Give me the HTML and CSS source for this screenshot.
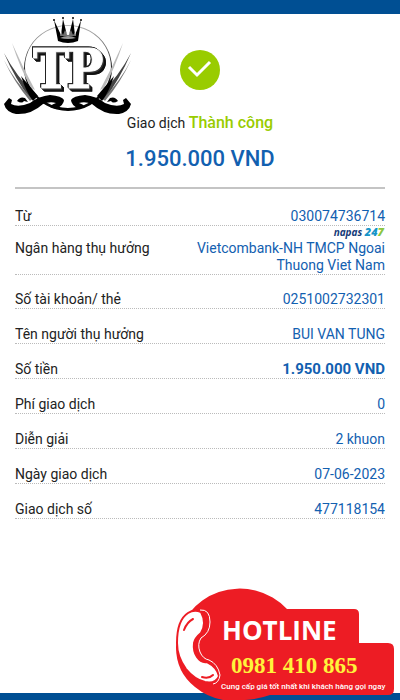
FILE: index.html
```html
<!DOCTYPE html>
<html lang="vi">
  <head>
    <meta charset="utf-8" />
    <meta name="viewport" content="width=device-width, initial-scale=1" />
    <title>Giao dịch thành công</title>
    <link rel="stylesheet" href="styles.css" />
  </head>
  <body>
    <div class="bar bar-top"></div>

    <svg class="crest" viewBox="0 14 136 104" role="img" aria-label="TP">
      <defs>
        <linearGradient id="ring" x1="0" y1="0" x2="0" y2="1">
          <stop offset="0" stop-color="#bbb" />
          <stop offset="0.5" stop-color="#222" />
          <stop offset="1" stop-color="#000" />
        </linearGradient>
        <g id="wing">
          <path d="M4 53 Q16 76 36 96 L31 100 Q15 79 4 53Z" fill="#444" />
          <path d="M4 60 Q14 80 32 99 L30 101 Q14 82 4 60Z" fill="#777" />
          <path d="M12 43 Q22 66 35 90 L31 88 Q20 68 12 43Z" fill="#bbb" />
          <path d="M21 76 L38 96 L33 101 Q26 92 21 76Z" />
          <path d="M4 104 L9 98 L12 100 L11 104 Q18 108 30 103 Q39 96 50 95 Q62 96 64 100 Q64 105 56 109 L50 107 Q52 104 56 103 Q50 101 43 104 Q31 115 16 114 Q6 112 4 104Z" />
          <path d="M17 101 Q20 96 25 98 L28 102 L24 101 Q22 104 17 101Z" />
        </g>
      </defs>
      <path d="M68 25 A44 43 0 1 0 68.1 25Z M68 26 A43 41 0 1 1 67.9 26Z" fill="url(#ring)" fill-rule="evenodd" />
      <use href="#wing" />
      <use href="#wing" transform="matrix(-1 0 0 1 135 0)" />
      <g>
        <path d="M58 41 L54 20 L61 35 L63 19 L67 35 L69 35 L73 19 L75 35 L81 20 L78 41 Q68 45 58 41Z" />
        <path d="M60 38 Q68 34 76 38 Q68 40 60 38Z" fill="#999" />
        <path d="M60 36 L61 31 L63 35 L65 30 L68 35 L71 30 L73 35 L76 31 L76 36Z" fill="#ddd" opacity="0.5" />
        <circle cx="54" cy="20" r="1" />
        <circle cx="63" cy="18" r="1" />
        <circle cx="73" cy="18" r="1" />
        <circle cx="81" cy="20" r="1" />
      </g>
      <text class="crest-text" y="88"><tspan x="33">T</tspan><tspan x="67">P</tspan></text>
    </svg>

    <main class="receipt">
      <header class="summary">
        <svg class="check" viewBox="0 0 40 40" aria-hidden="true">
          <circle cx="20" cy="20" r="20" fill="#99cc00" />
          <path d="M9 17 L17 25 L30 12" fill="none" stroke="#fff" stroke-width="3" />
        </svg>
        <p class="status">Giao dịch <strong>Thành công</strong></p>
        <h1 class="amount">1.950.000 VND</h1>
      </header>

      <dl class="details">
        <div class="row">
          <dt>Từ</dt>
          <dd>030074736714</dd>
        </div>
        <div class="row row-bank">
          <dt>Ngân hàng thụ hưởng</dt>
          <dd>
            <span class="napas">napas <b>24<i>7</i></b></span>
            Vietcombank-NH TMCP Ngoai Thuong Viet Nam
          </dd>
        </div>
        <div class="row row-account">
          <dt>Số tài khoản/ thẻ</dt>
          <dd>0251002732301</dd>
        </div>
        <div class="row">
          <dt>Tên người thụ hưởng</dt>
          <dd>BUI VAN TUNG</dd>
        </div>
        <div class="row">
          <dt>Số tiền</dt>
          <dd class="total">1.950.000 VND</dd>
        </div>
        <div class="row">
          <dt>Phí giao dịch</dt>
          <dd>0</dd>
        </div>
        <div class="row">
          <dt>Diễn giải</dt>
          <dd>2 khuon</dd>
        </div>
        <div class="row">
          <dt>Ngày giao dịch</dt>
          <dd>07-06-2023</dd>
        </div>
        <div class="row">
          <dt>Giao dịch số</dt>
          <dd>477118154</dd>
        </div>
      </dl>
    </main>

    <div class="bar bar-bottom"></div>

    <!-- hotline sticker, sits over the bottom right corner -->
    <aside class="hotline">
      <svg viewBox="0 0 225 115" role="img" aria-label="Hotline 0981 410 865">
        <path fill="#ed1c24" d="M112 24 H179 Q184 24 184 29 V58 H213 Q219 58 219 64 V104 Q219 110 213 110 H95 Q84 114 70 115 H48 Q32 112 20 102 Q1 87 1 62 A64 63 0 0 1 112 24Z" />
        <!-- handset -->
        <path fill="#fff" stroke="#ed1c24" stroke-width="2" d="M2 58 Q2 35 13 28 Q19 24 26 27 Q32 38 26 48 Q20 53 19 58 Q18 66 22 72 Q26 78 32 77 Q42 82 44 91 Q41 99 30 97 Q19 94 11 84 Q2 72 2 58Z" />
        <path fill="none" stroke="#fff" d="M25 25 Q35 24 35 37 Q35 48 26 53 Q22 59 25 67 Q28 74 34 75 Q43 79 45 90 Q44 98 38 99" />
        <path fill="none" stroke="#ed1c24" stroke-width="2" stroke-linecap="round" d="M9 45 Q12 37 18 34 M27 92 Q34 94 38 90" />
        <text class="hotline-title" x="47" y="55">HOTLINE</text>
        <text class="hotline-phone" x="56" y="88">0981 410 865</text>
        <text class="hotline-note" x="46" y="104">Cung cấp giá tốt nhất khi khách hàng gọi ngay</text>
      </svg>
    </aside>
  </body>
</html>
```

FILE: styles.css
```css
* {
  box-sizing: border-box;
}

body {
  position: relative;
  display: flex;
  flex-direction: column;
  min-height: 100vh;
  margin: 0;
  background: #fff;
  color: #222;
  font: 14px/17px Roboto, "Noto Sans", sans-serif;
}

.bar {
  flex: none;
  background: #004f93;
}

.bar-top {
  height: 14px;
}

.bar-bottom {
  height: 7px;
}

.crest {
  position: absolute;
  top: 14px;
  left: 0;
  width: 136px;
  height: 104px;
}

.crest-text {
  fill: #fff;
  stroke: #fff;
  stroke-width: 1px;
  font: bold 54px "DejaVu Serif Condensed", "DejaVu Serif", serif;
  filter: drop-shadow(0 0 0 #000) drop-shadow(-1px -1px 0 #222)
    drop-shadow(1px 1px 0 #333) drop-shadow(2px 2px 0 #111);
}

.receipt {
  flex: 1;
  padding: 36px 15px 0;
}

.summary {
  display: flex;
  flex-direction: column;
  align-items: center;
  padding-bottom: 14px;
  border-bottom: 2px solid #c4c4c4;
}

.check {
  width: 40px;
  height: 40px;
}

.status {
  margin: 24px 0 0;
}

.status strong {
  color: #99cc00;
  font-size: 16px;
  font-weight: 500;
}

.amount {
  margin: 13px 0 0;
  color: #1260b0;
  font-size: 22px;
  font-weight: 500;
  line-height: 28px;
}

.details {
  margin: 2px 0 0;
}

.row {
  position: relative;
  display: flex;
  justify-content: space-between;
  gap: 16px;
  padding-top: 17px;
  border-bottom: 1px dotted #bbb;
}

.row-bank {
  padding-top: 14px;
}

.row-account {
  padding-top: 16px;
}

dt {
  flex: none;
}

dd {
  max-width: 190px;
  margin: 0;
  color: #1260b0;
  text-align: right;
}

.total {
  font-size: 15px;
  font-weight: 700;
}

/* small brand mark above the bank name */
.napas {
  position: absolute;
  top: 0;
  right: 1px;
  color: #143a78;
  font: italic bold 10px/12px "Open Sans", sans-serif;
}

.napas b {
  color: #1595c8;
  font-size: 11px;
  font-weight: 800;
}

.napas i {
  color: #8cc63f;
}

.hotline {
  position: absolute;
  right: 0;
  bottom: 0;
  width: 225px;
  height: 115px;
}

.hotline svg {
  display: block;
  width: 100%;
  height: 100%;
}

.hotline-title {
  fill: #fff;
  font: bold 26px "Open Sans", sans-serif;
}

.hotline-phone {
  fill: #fff33b;
  font: bold 23px "Liberation Serif", serif;
}

.hotline-note {
  fill: #fff;
  font: 500 8px Roboto, sans-serif;
}
```
